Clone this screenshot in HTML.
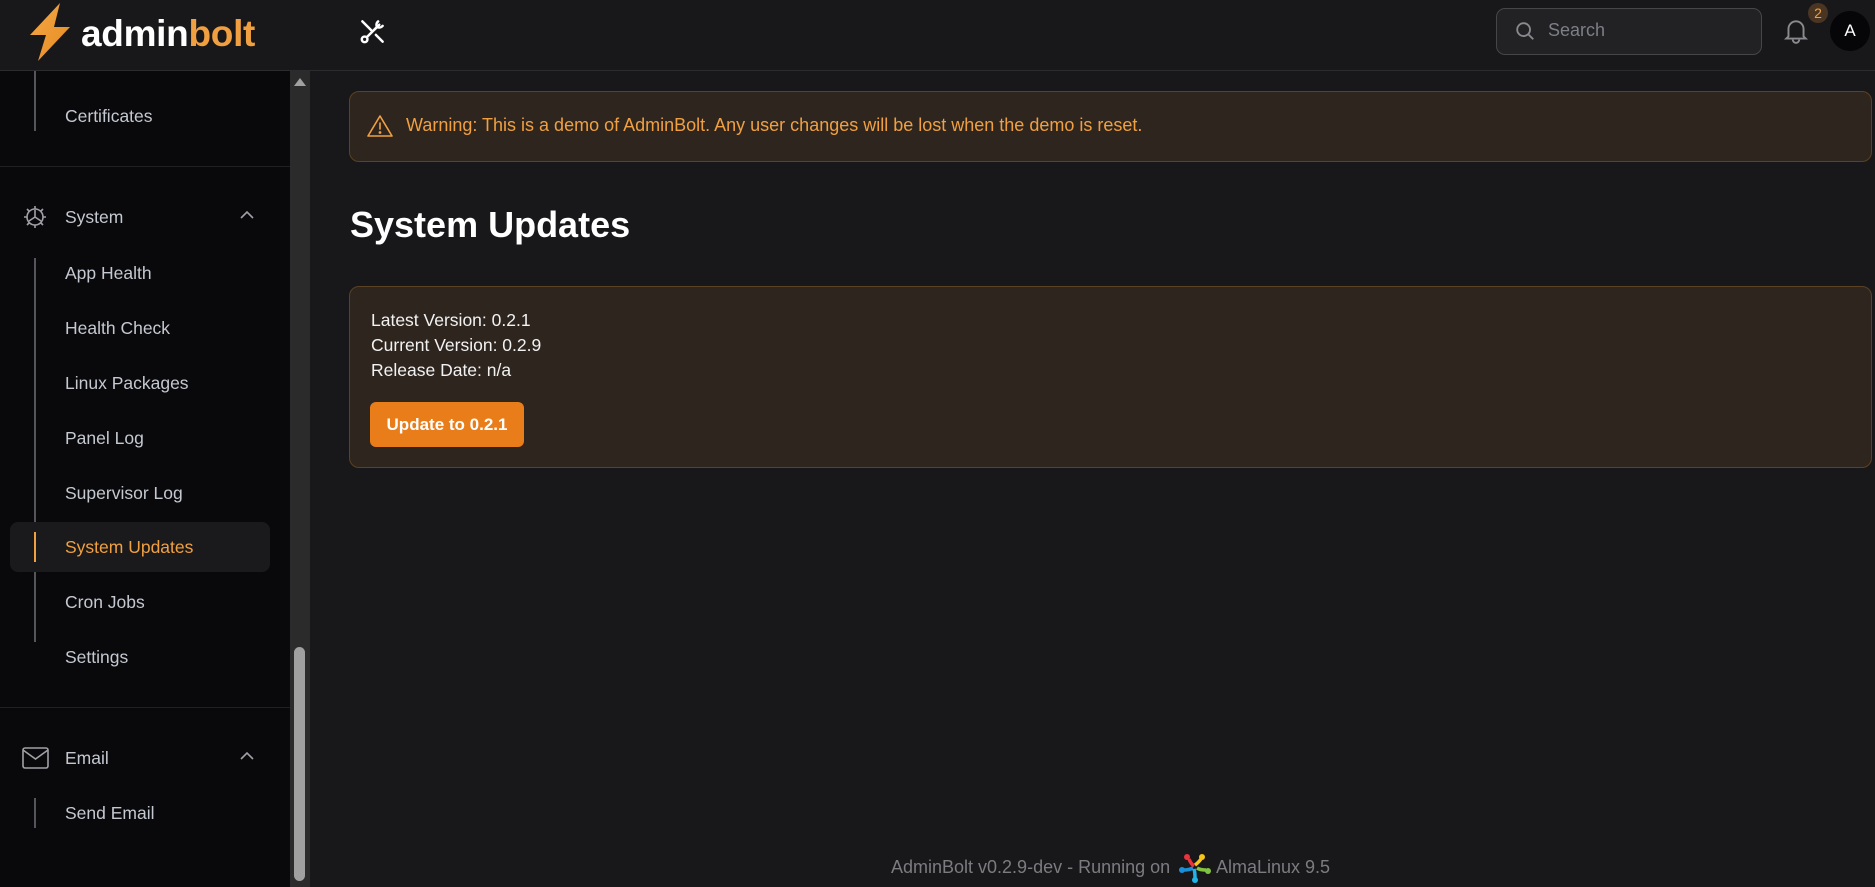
<!DOCTYPE html>
<html><head><meta charset="utf-8"><style>
*{margin:0;padding:0;box-sizing:border-box}
body{width:1875px;height:887px;overflow:hidden;background:#18181b;font-family:"Liberation Sans",sans-serif;position:relative}
.hdr{position:absolute;left:0;top:0;width:1875px;height:71px;background:#18181b;border-bottom:1px solid #2c2c30}
.side{position:absolute;left:0;top:71px;width:290px;height:816px;background:#09090b}
.sb{position:absolute;left:290px;top:71px;width:20px;height:816px;background:#2b2b2b}
.it{position:absolute;left:65px;font-size:17.5px;color:#c4c8d0}
.vl{position:absolute;left:34px;width:2px;background:#55565c}
.dv{position:absolute;left:0;width:290px;height:1px;background:#202024}
.abs{position:absolute}
</style></head><body>
<div class="hdr">
 <svg class="abs" style="left:28px;top:3px" width="46" height="58" viewBox="0 0 46 58"><defs><linearGradient id="g" x1="0" y1="0" x2="1" y2="1"><stop offset="0" stop-color="#f5a94a"/><stop offset="1" stop-color="#e58a1e"/></linearGradient></defs><path d="M32 0 L2 32 L18 32 L10 58 L42 24 L26 24 Z" fill="url(#g)"/></svg>
 <div class="abs" style="left:81px;top:13px;font-size:37px;font-weight:bold;color:#fff;letter-spacing:-0.3px">admin<span style="color:#f0a040">bolt</span></div>
 <svg class="abs" style="left:359px;top:18px" width="27" height="27" viewBox="0 0 24 24" fill="none" stroke="#fff" stroke-width="2.2" stroke-linecap="round"><path d="M3 3l8 8M21 21l-6-6"/><circle cx="5" cy="19" r="2.5"/><path d="M7 17l11-11"/><path d="M17 3a4 4 0 0 0-1 5l-2 2M21 7a4 4 0 0 1-5 1"/></svg>
 <div class="abs" style="left:1496px;top:8px;width:266px;height:47px;border:1px solid #46464a;border-radius:9px;background:#222225"></div>
 <svg class="abs" style="left:1514px;top:20px" width="22" height="22" viewBox="0 0 24 24" fill="none" stroke="#8a8a8e" stroke-width="2"><circle cx="10.5" cy="10.5" r="7"/><path d="M16 16l5 5"/></svg>
 <div class="abs" style="left:1548px;top:20px;font-size:18px;color:#7c7f86">Search</div>
 <svg class="abs" style="left:1783px;top:17px" width="26" height="28" viewBox="0 0 24 26" fill="none" stroke="#8a8a8e" stroke-width="1.8"><path d="M5 18V11a7 7 0 0 1 14 0v7l2 2H3z"/><path d="M9 21a3 3 0 0 0 6 0"/></svg>
 <div class="abs" style="left:1808px;top:3px;width:20px;height:20px;border-radius:50%;background:#4a3522;color:#f0a040;font-size:14px;text-align:center;line-height:20px">2</div>
 <div class="abs" style="left:1830px;top:11px;width:40px;height:40px;border-radius:50%;background:#060608;color:#fff;font-size:17px;text-align:center;line-height:40px">A</div>
</div>
<div class="side">
 <div class="vl" style="top:0;height:60px"></div>
 <div class="it" style="top:35px">Certificates</div>
 <div class="dv" style="top:95px"></div>
 <svg class="abs" style="left:23px;top:134px" width="24" height="24" viewBox="0 0 24 24" fill="none" stroke="#a0a0a6" stroke-width="1.6"><circle cx="12" cy="12" r="8"/><path d="M12 12V5M12 12l6 4M12 12l-6 4"/><path d="M12 1v3M12 20v3M1 12h3M20 12h3M4 4l2 2M18 18l2 2M4 20l2-2M18 6l2-2"/></svg>
 <div class="it" style="top:136px">System</div>
 <svg class="abs" style="left:240px;top:139px" width="14" height="10" viewBox="0 0 14 10" fill="none" stroke="#a0a0a6" stroke-width="1.6"><path d="M1 8l6-6 6 6"/></svg>
 <div class="vl" style="top:187px;height:384px"></div>
 <div class="it" style="top:192px">App Health</div>
 <div class="it" style="top:247px">Health Check</div>
 <div class="it" style="top:302px">Linux Packages</div>
 <div class="it" style="top:357px">Panel Log</div>
 <div class="it" style="top:412px">Supervisor Log</div>
 <div class="abs" style="left:10px;top:451px;width:260px;height:50px;border-radius:8px;background:#1a1a1c"></div>
 <div class="abs" style="left:34px;top:461px;width:2px;height:30px;background:#f0a040"></div>
 <div class="it" style="top:466px;color:#f0a040">System Updates</div>
 <div class="it" style="top:521px">Cron Jobs</div>
 <div class="it" style="top:576px">Settings</div>
 <div class="dv" style="top:636px"></div>
 <svg class="abs" style="left:22px;top:676px" width="27" height="22" viewBox="0 0 27 22" fill="none" stroke="#a0a0a6" stroke-width="1.6"><rect x="1" y="1" width="25" height="20" rx="2"/><path d="M1 3l12.5 9L26 3"/></svg>
 <div class="it" style="top:677px">Email</div>
 <svg class="abs" style="left:240px;top:680px" width="14" height="10" viewBox="0 0 14 10" fill="none" stroke="#a0a0a6" stroke-width="1.6"><path d="M1 8l6-6 6 6"/></svg>
 <div class="vl" style="top:727px;height:30px"></div>
 <div class="it" style="top:732px">Send Email</div>
</div>
<div class="sb">
 <svg class="abs" style="left:4px;top:6px" width="12" height="9"><path d="M0 9L6 1L12 9z" fill="#a0a0a0"/></svg>
 <div class="abs" style="left:4px;top:576px;width:11px;height:234px;border-radius:6px;background:#a0a0a0"></div>
</div>
<div class="abs" style="left:349px;top:91px;width:1523px;height:71px;border:1px solid #5a4222;border-radius:10px;background:#2e251f"></div>
<svg class="abs" style="left:367px;top:114px" width="26" height="24" viewBox="0 0 26 24" fill="none" stroke="#f0a040" stroke-width="1.6" stroke-linejoin="round"><path d="M13 2L1 22h24z"/><path d="M13 9v6" stroke-linecap="round"/><circle cx="13" cy="18.5" r="0.6" fill="#f0a040"/></svg>
<div class="abs" style="left:406px;top:115px;font-size:18px;color:#f0a040">Warning: This is a demo of AdminBolt. Any user changes will be lost when the demo is reset.</div>
<div class="abs" style="left:350px;top:204px;font-size:36px;font-weight:bold;color:#fff">System Updates</div>
<div class="abs" style="left:349px;top:286px;width:1523px;height:182px;border:1px solid #5a4222;border-radius:10px;background:#2e251f"></div>
<div class="abs" style="left:371px;top:308px;font-size:17.5px;color:#f2f2f2;line-height:25px">Latest Version: 0.2.1<br>Current Version: 0.2.9<br>Release Date: n/a</div>
<div class="abs" style="left:370px;top:402px;width:154px;height:45px;border-radius:6px;background:#e97d1a;color:#fff;font-size:17px;font-weight:bold;text-align:center;line-height:45px">Update to 0.2.1</div>
<div class="abs" style="left:891px;top:857px;font-size:18px;color:#7c7c80">AdminBolt v0.2.9-dev - Running on</div>
<svg class="abs" style="left:1179px;top:853px" width="32" height="30" viewBox="0 0 32 30"><circle cx="8" cy="4" r="3" fill="#e8343a"/><circle cx="23" cy="4" r="3" fill="#f5c518"/><circle cx="29" cy="18" r="3" fill="#80c341"/><circle cx="3" cy="17" r="3" fill="#1a8fd8"/><circle cx="16" cy="27" r="3" fill="#20b5e8"/><path d="M10 6q2 5 5 7" stroke="#e8343a" stroke-width="3.5" fill="none"/><path d="M22 6q-3 4-6 6" stroke="#f5c518" stroke-width="3.5" fill="none"/><path d="M27 17q-6 0-9-2" stroke="#80c341" stroke-width="3.5" fill="none"/><path d="M5 17q5 0 9-2" stroke="#1a8fd8" stroke-width="3.5" fill="none"/><path d="M16 25q0-6-1-9" stroke="#20b5e8" stroke-width="3.5" fill="none"/></svg>
<div class="abs" style="left:1216px;top:857px;font-size:18px;color:#7c7c80">AlmaLinux 9.5</div>
</body></html>
